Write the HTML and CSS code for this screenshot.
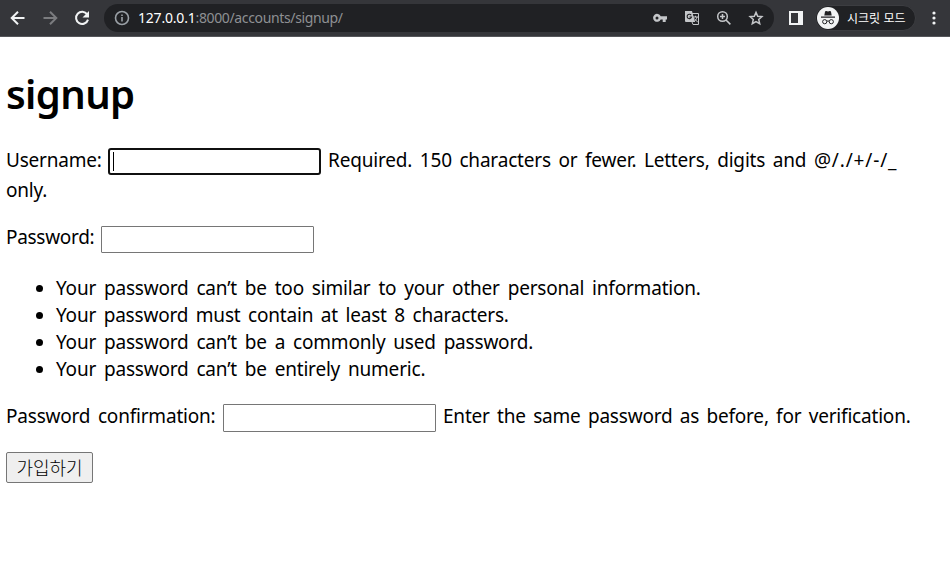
FILE: index.html
```html
<!DOCTYPE html>
<html lang="ko">
<head>
<meta charset="utf-8">
<title>signup</title>
<link rel="stylesheet" href="styles.css">
</head>
<body>
<header class="toolbar">
  <svg class="nav" width="16" height="16" viewBox="0 0 16 16"><path d="M14.5 8H2M8 1.7 1.7 8 8 14.3"/></svg>
  <svg class="nav dim" width="16" height="16" viewBox="0 0 16 16"><path d="M1.5 8H14M8 1.7 14.3 8 8 14.3"/></svg>
  <svg class="nav" width="16" height="16" viewBox="0 0 16 16"><path d="M13.2 4.4A6.1 6.1 0 1 0 14 9.6"/><path class="solid" d="M15 1v6.5H8.5z"/></svg>
  <div class="address">
    <svg class="info" width="16" height="16" viewBox="0 0 16 16"><circle cx="8" cy="8" r="6.5"/><path d="M8 7v4.5M8 4.4v1.7"/></svg>
    <span class="url"><b>127.0.0.1</b>:8000/accounts/signup/</span>
    <div class="actions">
      <svg width="16" height="16" viewBox="0 0 16 16"><path class="fill" fill-rule="evenodd" d="M8.7 6.2H15v3.3h-1.3V12h-3V9.5h-2A4 4 0 1 1 8.7 6.2zM5 6.5a1.5 1.5 0 1 0 0 3 1.5 1.5 0 0 0 0-3z"/></svg>
      <svg width="16" height="16" viewBox="0 0 16 16"><path class="fill" d="M1 1h7l3 11H2a1 1 0 0 1-1-1z"/><path class="thin" d="M8 3.5h6.5v11H9L8 12M9 7h5M11.5 5.8V7M13 7c-.4 2-1.6 3.6-3 4.7M10.3 8.5l3.4 3.7"/><path class="cut" d="M7.2 5.2A2.2 2.2 0 1 0 7.5 7H5.4"/></svg>
      <svg width="16" height="16" viewBox="0 0 16 16"><circle cx="6.5" cy="6.5" r="4.8"/><path d="M10 10l4.4 4.4M4 6.5h5M6.5 4v5"/></svg>
      <svg width="16" height="16" viewBox="0 0 16 16"><path d="M8 2.4l1.7 3.9 4.2.4-3.2 2.8 1 4.2L8 11.5l-3.7 2.2 1-4.2-3.2-2.8 4.2-.4z"/></svg>
    </div>
  </div>
  <svg class="panel" width="14" height="14" viewBox="0 0 14 14"><path d="M0 0h14v14H0zM2 2v10h7V2z"/></svg>
  <div class="incognito">
    <svg width="22" height="22" viewBox="0 0 22 22"><circle class="disc" cx="11" cy="11" r="11"/><path class="hat" d="M7.3 8.5 8 4.8q.3-1 1.2-.8l1.8.5 1.8-.5q.9-.2 1.2.8l.7 3.7zM4 9.4h14v1.3H4z"/><circle class="lens" cx="7.7" cy="14.7" r="2.1"/><circle class="lens" cx="14.3" cy="14.7" r="2.1"/><path class="lens" d="M9.8 14.2q1.2-.5 2.4 0"/></svg>
    <span class="mode">시크릿 모드</span>
  </div>
  <svg class="menu" width="4" height="16" viewBox="0 0 4 16"><circle cx="2" cy="3" r="1.6"/><circle cx="2" cy="8" r="1.6"/><circle cx="2" cy="13" r="1.6"/></svg>
</header>
<main>
  <h1>signup</h1>
  <form>
    <div class="row">
      <label class="l-user">Username:</label><div class="field focused"><i class="caret"></i></div><span class="help h-user">Required. 150 characters or fewer. Letters, digits and <span class="symbols">@/./+/-/_</span></span>
    </div>
    <div class="wrap">only.</div>
    <div class="row pass">
      <label class="l-pass">Password:</label><div class="field"></div>
    </div>
    <ul>
      <li class="loose">Your password can’t be too similar to your other personal information.</li>
      <li>Your password must contain at least 8 characters.</li>
      <li class="loose">Your password can’t be a commonly used password.</li>
      <li class="loose">Your password can’t be entirely numeric.</li>
    </ul>
    <div class="row confirm">
      <label class="l-conf">Password confirmation:</label><div class="field tall"></div><span class="help h-conf">Enter the same password as before, for verification.</span>
    </div>
    <button type="button">가입하기</button>
  </form>
</main>
</body>
</html>
```
FILE: styles.css
```css
* { box-sizing: border-box; }
body { margin: 0; background: #fff; color: #000; font-family: "Noto Sans", "Noto Sans CJK KR", sans-serif; font-size: 19px; }
svg { flex: none; }

.toolbar { display: flex; align-items: center; height: 37px; padding: 0 0 1px 10px; background: #35363a; border-bottom: 1px solid #55565a; }
.nav { margin-right: 16px; fill: none; stroke: #f1f3f4; stroke-width: 2; }
.nav.dim { stroke: #7b7c7f; }
.nav .solid { fill: #f1f3f4; stroke: none; }
.address { display: flex; align-items: center; width: 670px; height: 28px; margin-left: -2px; padding: 0 10px; border-radius: 14px; background: #202124; }
.info { fill: none; stroke: #9aa0a6; stroke-width: 1.6; }
.url { margin-left: 8px; font: 14px/20px "Noto Sans", sans-serif; letter-spacing: -.36px; color: #8e9093; white-space: nowrap; }
.url b { font-weight: 400; letter-spacing: -.2px; color: #fff; }
.actions { display: flex; gap: 16px; margin-left: auto; fill: none; stroke: #c4c6c9; stroke-width: 1.5; }
.actions .fill { fill: #c4c6c9; stroke: none; }
.actions .thin { stroke-width: 1; }
.actions .cut { stroke: #202124; stroke-width: 1.1; }
.panel { margin-left: 15px; fill: #f1f3f4; }
.incognito { display: flex; align-items: center; width: 101px; height: 26px; margin-left: 12px; padding-left: 1px; border-radius: 13px; background: #202124; border: 1px solid #3c3d41; }
.disc { fill: #f1f3f4; }
.hat { fill: #202124; }
.lens { fill: none; stroke: #202124; stroke-width: 1; }
.mode { margin-left: 8px; color: #fff; font: 12px/18px "Noto Sans CJK KR", sans-serif; white-space: nowrap; }
.menu { margin-left: 16px; fill: #f1f3f4; }

main { padding: 30px 6px 0; }
h1 { margin: 0; font-size: 40px; line-height: 54px; font-weight: 600; letter-spacing: -.6px; }
form { letter-spacing: -.2px; word-spacing: 2.85px; }
.row { display: flex; align-items: center; height: 27px; margin-top: 27px; line-height: 27px; white-space: nowrap; }
label, .help { padding-bottom: 2px; }
.pass label, .confirm label, .confirm .help { padding-bottom: 4px; }
label { flex: none; }
.l-user { width: 102px; }
.l-pass { width: 95px; letter-spacing: -.3px; }
.l-conf { width: 217px; }
.field { flex: none; width: 213px; height: 27px; border: 1px solid #767676; border-radius: 1px; }
.field.tall { height: 28px; }
.field.focused { display: flex; align-items: center; padding-left: 3px; border: 2px solid #101010; border-radius: 3px; }
.caret { width: 1px; height: 19px; background: #000; }
.help { margin-left: 7px; }
.h-user { word-spacing: 2.8px; letter-spacing: -.18px; }
.symbols { letter-spacing: .85px; }
.h-conf { word-spacing: 2.6px; }
.wrap { height: 30px; line-height: 30px; }
.row.pass { margin-top: 21px; }
ul { margin: 22px 0 0; padding-left: 50px; line-height: 27px; }
.loose { word-spacing: 3.15px; }
.row.confirm { height: 28px; margin-top: 21px; }
button { display: block; width: 87px; height: 31px; margin: 20px 0 0; padding: 0; border: 1px solid #767676; border-radius: 2px; background: #efefef; color: #000; font: 300 18px/27px "Noto Sans CJK KR", sans-serif; }
```
